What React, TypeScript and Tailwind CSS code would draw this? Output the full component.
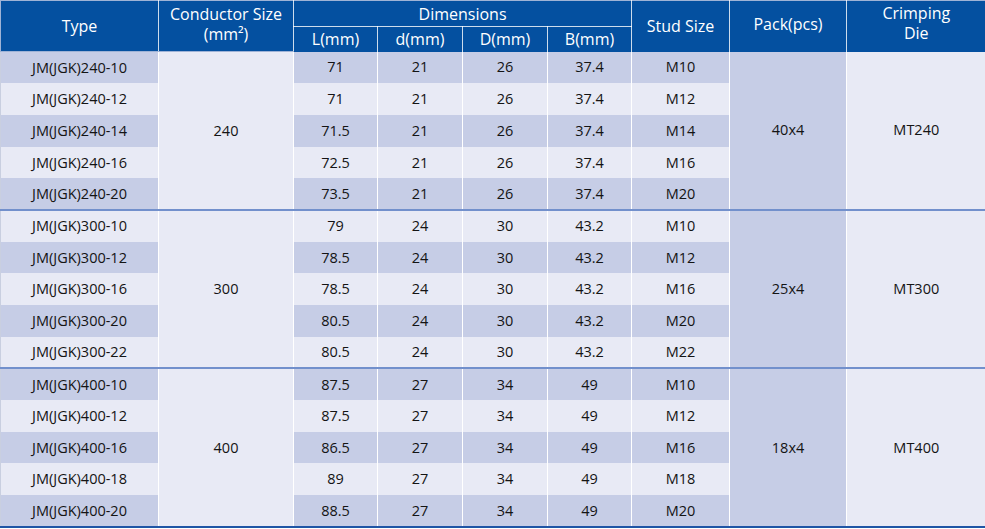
const groups = [
  {
    size: "240",
    pack: "40x4",
    die: "MT240",
    rows: [
      ["JM(JGK)240-10", "71", "21", "26", "37.4", "M10"],
      ["JM(JGK)240-12", "71", "21", "26", "37.4", "M12"],
      ["JM(JGK)240-14", "71.5", "21", "26", "37.4", "M14"],
      ["JM(JGK)240-16", "72.5", "21", "26", "37.4", "M16"],
      ["JM(JGK)240-20", "73.5", "21", "26", "37.4", "M20"],
    ],
  },
  {
    size: "300",
    pack: "25x4",
    die: "MT300",
    rows: [
      ["JM(JGK)300-10", "79", "24", "30", "43.2", "M10"],
      ["JM(JGK)300-12", "78.5", "24", "30", "43.2", "M12"],
      ["JM(JGK)300-16", "78.5", "24", "30", "43.2", "M16"],
      ["JM(JGK)300-20", "80.5", "24", "30", "43.2", "M20"],
      ["JM(JGK)300-22", "80.5", "24", "30", "43.2", "M22"],
    ],
  },
  {
    size: "400",
    pack: "18x4",
    die: "MT400",
    rows: [
      ["JM(JGK)400-10", "87.5", "27", "34", "49", "M10"],
      ["JM(JGK)400-12", "87.5", "27", "34", "49", "M12"],
      ["JM(JGK)400-16", "86.5", "27", "34", "49", "M16"],
      ["JM(JGK)400-18", "89", "27", "34", "49", "M18"],
      ["JM(JGK)400-20", "88.5", "27", "34", "49", "M20"],
    ],
  },
];

const DARK = "bg-[#c6cde6]";
const LIGHT = "bg-[#e8eaf5]";

export default function App() {
  return (
    <div className="w-[985px] h-[529px] bg-white font-['Open_Sans',sans-serif]">
      <table className="w-[985px] table-fixed border-collapse text-center">
        <colgroup>
          <col className="w-[158px]" />
          <col className="w-[135px]" />
          <col className="w-[84px]" />
          <col className="w-[85px]" />
          <col className="w-[85px]" />
          <col className="w-[84px]" />
          <col className="w-[98px]" />
          <col className="w-[117px]" />
          <col className="w-[139px]" />
        </colgroup>
        <thead className="bg-[#0450a0] text-white text-[16px] leading-[20px]">
          <tr className="h-[26px]">
            <th rowSpan={2} className="font-normal border border-[#9fb3d6] border-r-white/80">
              Type
            </th>
            <th rowSpan={2} className="font-normal border border-[#9fb3d6] border-r-white/80 pb-[4px]">
              Conductor Size
              <br />
              (mm²)
            </th>
            <th colSpan={4} className="font-normal border-t border-t-[#9fb3d6] border-b border-b-white/80 border-r border-r-white/80">
              Dimensions
            </th>
            <th rowSpan={2} className="font-normal border-t border-t-[#9fb3d6] border-r border-r-white/80">
              Stud Size
            </th>
            <th rowSpan={2} className="font-normal border-t border-t-[#9fb3d6] border-r border-r-white/80 pb-[4px]">
              Pack(pcs)
            </th>
            <th rowSpan={2} className="font-normal border-t border-t-[#9fb3d6] pb-[6px]">
              Crimping
              <br />
              Die
            </th>
          </tr>
          <tr className="h-[25px]">
            {["L(mm)", "d(mm)", "D(mm)", "B(mm)"].map((h) => (
              <th key={h} className="font-normal border-r border-r-white/80">
                {h}
              </th>
            ))}
          </tr>
        </thead>
        <tbody className="text-[14.5px] text-[#141414]">
          {groups.map((g, gi) =>
            g.rows.map((r, ri) => {
              const idx = gi * 5 + ri;
              const bg = idx % 2 === 0 ? DARK : LIGHT;
              const last = ri === 4;
              const lineColor = gi < 2 ? "border-b-[#7290cc]" : "border-b-[#1f55a5]";
              const sep = last ? `border-b-2 ${lineColor}` : "";
              const cell = `border-r border-r-white ${bg} ${sep}`;
              return (
                <tr key={r[0]} className="h-[31.7px]">
                  <td className={`${cell} border-l border-l-[#c9cfe0]`}>{r[0]}</td>
                  {ri === 0 && (
                    <td rowSpan={5} className={`border-r border-r-white ${LIGHT} border-b-2 ${lineColor}`}>
                      {g.size}
                    </td>
                  )}
                  {r.slice(1).map((v, ci) => (
                    <td key={ci} className={cell}>
                      {v}
                    </td>
                  ))}
                  {ri === 0 && (
                    <>
                      <td rowSpan={5} className={`border-r border-r-white ${DARK} border-b-2 ${lineColor}`}>
                        {g.pack}
                      </td>
                      <td rowSpan={5} className={`${LIGHT} border-b-2 ${lineColor}`}>
                        {g.die}
                      </td>
                    </>
                  )}
                </tr>
              );
            }),
          )}
        </tbody>
      </table>
    </div>
  );
}
